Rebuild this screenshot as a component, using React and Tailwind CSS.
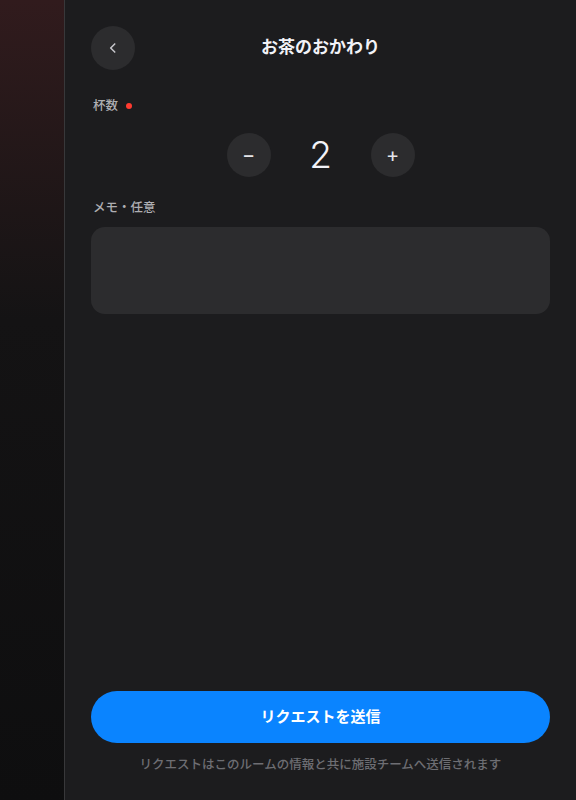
import React, { useState } from 'react';

export default function App() {
  const [count, setCount] = useState(2);
  const [memo, setMemo] = useState('');

  return (
    <div
      className="flex w-[576px] h-[800px] overflow-hidden bg-[#1c1c1e]"
      style={{ fontFamily: '"Inter", "Noto Sans CJK JP", sans-serif' }}
    >
      {/* backdrop strip */}
      <div className="w-[64px] shrink-0 bg-gradient-to-b from-[#311b1d] via-[#141314] via-40% to-[#0e0e0f]" />

      {/* sheet */}
      <div className="flex flex-1 flex-col border-l border-[#38383a] bg-[#1c1c1e] px-[26px] pt-[26px] pb-[25px]">
        {/* header */}
        <div className="relative flex h-[44px] items-center justify-center">
          <button className="absolute left-0 top-0 flex h-[44px] w-[44px] items-center justify-center rounded-full bg-[#2c2c2e] text-[#c7c7cc]">
            <svg width="14" height="14" viewBox="0 0 24 24" fill="none" stroke="currentColor" strokeWidth="2.6" strokeLinecap="round" strokeLinejoin="round">
              <path d="M15 5l-7 7 7 7" />
            </svg>
          </button>
          <h1 className="text-[17px] font-bold text-[#f2f2f7]">お茶のおかわり</h1>
        </div>

        {/* count */}
        <div className="mt-[27px] flex items-center gap-[8px] px-[2px]">
          <span className="text-[12.5px] font-medium text-[#aeaeb2]">杯数</span>
          <span className="h-[6px] w-[6px] rounded-full bg-[#ff3b30]" />
        </div>

        <div className="mt-[17px] flex items-center justify-center gap-[12px]">
          <button
            onClick={() => setCount(Math.max(1, count - 1))}
            className="flex h-[44px] w-[44px] items-center justify-center rounded-full bg-[#2c2c2e] text-[20px] text-[#e5e5ea]"
          >
            −
          </button>
          <span className="w-[76px] text-center text-[37px] font-light leading-none text-[#f2f2f7]">{count}</span>
          <button
            onClick={() => setCount(count + 1)}
            className="flex h-[44px] w-[44px] items-center justify-center rounded-full bg-[#2c2c2e] text-[20px] text-[#e5e5ea]"
          >
            +
          </button>
        </div>

        {/* memo */}
        <div className="mt-[22px] px-[2px] text-[12.5px] font-medium text-[#aeaeb2]">メモ・任意</div>
        <textarea
          value={memo}
          onChange={(e) => setMemo(e.target.value)}
          className="mt-[9px] h-[87px] w-full resize-none rounded-[14px] bg-[#2c2c2e] p-[14px] text-[14px] text-white outline-none"
        />

        <div className="flex-1" />

        <button className="h-[52px] w-full rounded-full bg-[#0a84ff] text-[15px] font-bold text-white">
          リクエストを送信
        </button>
        <p className="mt-[13px] text-center text-[12.5px] font-medium text-[#6e6e73]">
          リクエストはこのルームの情報と共に施設チームへ送信されます
        </p>
      </div>
    </div>
  );
}
